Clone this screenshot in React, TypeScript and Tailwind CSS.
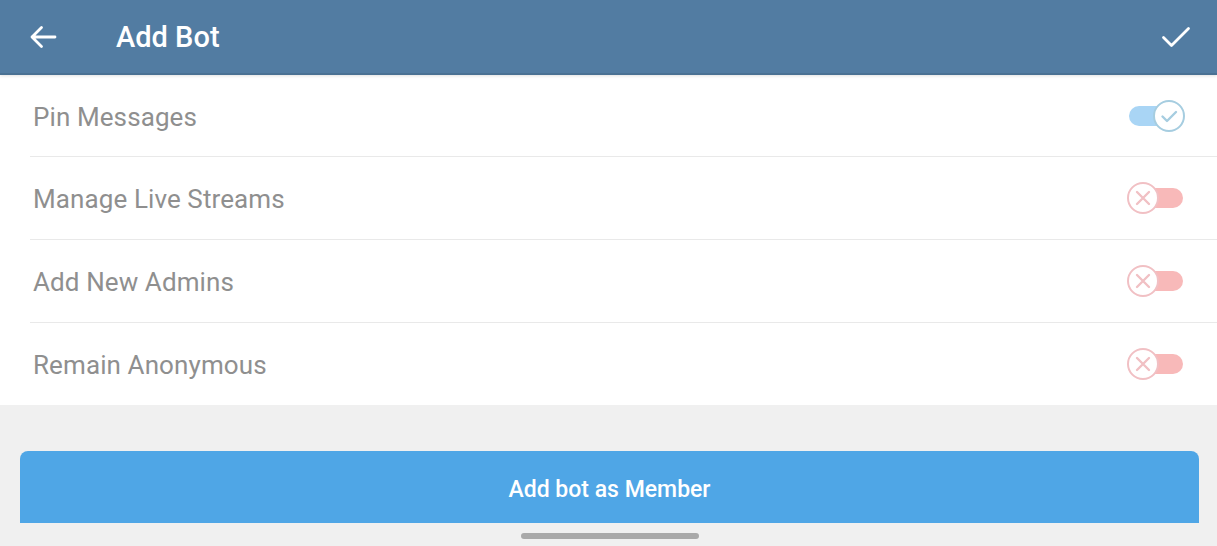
import React from 'react';

type Right = { label: string; on: boolean };

const rights: Right[] = [
  { label: 'Pin Messages', on: true },
  { label: 'Manage Live Streams', on: false },
  { label: 'Add New Admins', on: false },
  { label: 'Remain Anonymous', on: false },
];

const Toggle: React.FC<{ on: boolean }> = ({ on }) => {
  return (
    <div className="relative w-[58px] h-[32px]">
      <div
        className={
          on
            ? 'absolute left-[2px] right-[6px] top-[6px] h-[20px] rounded-full bg-[#a9d5f5]'
            : 'absolute left-[6px] right-[2px] top-[6px] h-[20px] rounded-full bg-[#f8b9b9]'
        }
      />
      <div
        className={
          on
            ? 'absolute right-0 top-0 w-[32px] h-[32px] rounded-full bg-white border-[2.5px] border-[#a6cde0] flex items-center justify-center'
            : 'absolute left-0 top-0 w-[32px] h-[32px] rounded-full bg-white border-[2.5px] border-[#f1c0c4] flex items-center justify-center'
        }
      >
        {on ? (
          <svg width="22" height="22" viewBox="0 0 22 22" fill="none">
            <path d="M4.5 11.5l4.5 4.5 9-9" stroke="#a6cde0" strokeWidth="2.4" strokeLinecap="round" strokeLinejoin="round" />
          </svg>
        ) : (
          <svg width="20" height="20" viewBox="0 0 20 20" fill="none">
            <path d="M4 4l12 12M16 4L4 16" stroke="#f1c0c4" strokeWidth="2.4" strokeLinecap="round" />
          </svg>
        )}
      </div>
    </div>
  );
};

export default function App() {
  return (
    <div
      className="w-[1217px] h-[546px] bg-[#f0f0f0] flex flex-col overflow-hidden"
      style={{ fontFamily: 'Roboto, "Noto Sans", sans-serif' }}
    >
      <header className="h-[75px] bg-[#527ca2] flex items-center shrink-0 border-b-[2px] border-[#4a7193] shadow-[0_1px_3px_rgba(0,0,0,0.12)] relative z-10">
        <button className="w-[84px] h-full flex items-center pl-[29px]">
          <svg width="28" height="24" viewBox="0 0 28 24" fill="none">
            <path d="M26 12H3M12.5 2.5L3 12l9.5 9.5" stroke="white" strokeWidth="2.8" strokeLinecap="round" strokeLinejoin="round" />
          </svg>
        </button>
        <h1 className="ml-[32px] pt-[2px] text-white text-[29px] font-medium">Add Bot</h1>
        <div className="flex-1" />
        <button className="pr-[26px] h-full flex items-center">
          <svg width="30" height="24" viewBox="0 0 30 24" fill="none">
            <path d="M2.5 12.5l8 8L27.5 3.5" stroke="white" strokeWidth="2.8" strokeLinecap="round" strokeLinejoin="round" />
          </svg>
        </button>
      </header>

      <div className="bg-white">
        {rights.map((r, i) => (
          <div key={r.label} className={i === 0 ? 'h-[81px]' : 'h-[83px]'}>
            {i > 0 && <div className="ml-[30px] h-px bg-[#e9e9e9]" />}
            <div className="h-[81px] flex items-center justify-between pl-[33px] pr-[32px]">
              <span className="pt-[4px] text-[26px] text-[#8f8f8f] tracking-[0.1px]">{r.label}</span>
              <Toggle on={r.on} />
            </div>
          </div>
        ))}
      </div>

      <div className="flex-1 pl-[20px] pr-[18px] pt-[46px] flex flex-col">
        <button className="w-full h-[72px] bg-[#4fa6e6] rounded-t-[8px] text-white text-[23px] font-medium flex items-center justify-center pt-[7px]">
          Add bot as Member
        </button>
        <div className="flex justify-center mt-[10px]">
          <div className="w-[178px] h-[6px] rounded-full bg-[#a9a9a9]" />
        </div>
      </div>
    </div>
  );
}
